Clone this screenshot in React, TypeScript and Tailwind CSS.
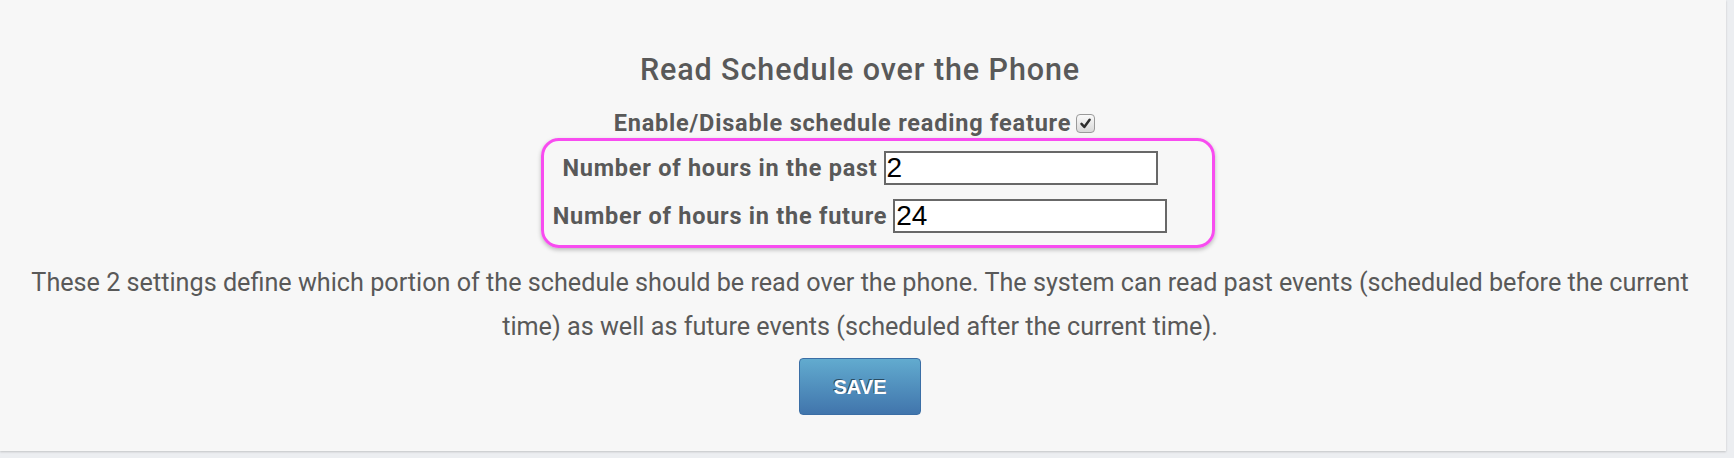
import { useState } from "react";

// Settings card: read schedule over the phone
export default function App() {
  const [past, setPast] = useState("2");
  const [future, setFuture] = useState("24");

  return (
    <div className="h-[458px] w-[1734px] overflow-hidden bg-[#eceef1] font-['Roboto',sans-serif] text-[#595959]">
      <div className="flex h-[451px] w-[1726px] flex-col items-center bg-[#f7f7f7] pr-[6px] shadow-[0_1px_2px_rgba(0,0,0,0.18)]">
        <h1 className="mt-[52px] text-[30.5px] font-medium leading-[36px] tracking-[0.9px]">
          Read Schedule over the Phone
        </h1>

        <label className="mt-[21px] flex items-center gap-[5px] pr-[11px] text-[23.5px] font-bold leading-[28px] tracking-[0.8px]">
          Enable/Disable schedule reading feature
          <span className="flex h-[19px] w-[19px] items-center justify-center rounded-[4px] border border-[#9a9a9a] bg-gradient-to-b from-[#fafafa] to-[#d9d9d9]">
            <svg viewBox="0 0 12 12" className="h-[13px] w-[13px]">
              <path d="M2.3 6.4 L4.9 9.2 L9.8 2.6" fill="none" stroke="#2e2e2e" strokeWidth="2.3" strokeLinecap="round" strokeLinejoin="round" />
            </svg>
          </span>
        </label>

        <div className="relative mt-[14px] flex flex-col items-center gap-[14px]">
          <div className="flex items-center gap-[6px]">
            <span className="text-[23.5px] font-bold leading-[28px] tracking-[0.75px]">Number of hours in the past</span>
            <input
              value={past}
              onChange={(e) => setPast(e.target.value)}
              className="h-[34px] w-[274px] border-2 border-[#686868] bg-white px-[1px] font-['Liberation_Sans',Arial,sans-serif] text-[28px] leading-none text-black outline-none"
            />
          </div>
          <div className="flex items-center gap-[6px]">
            <span className="text-[23.5px] font-bold leading-[28px] tracking-[0.75px]">Number of hours in the future</span>
            <input
              value={future}
              onChange={(e) => setFuture(e.target.value)}
              className="h-[34px] w-[274px] border-2 border-[#686868] bg-white px-[1px] font-['Liberation_Sans',Arial,sans-serif] text-[28px] leading-none text-black outline-none"
            />
          </div>
          {/* pink highlight annotation */}
          <div className="pointer-events-none absolute -top-[13px] -bottom-[15px] -left-[12px] -right-[48px] rounded-[18px] border-[3px] border-[#f84cf0] shadow-[0_2px_4px_rgba(0,0,0,0.25)]" />
        </div>

        <p className="mt-[28px] w-[1690px] text-center text-[25.2px] leading-[44px]">
          These 2 settings define which portion of the schedule should be read over the phone. The system can read past events (scheduled before the current time) as well as future events (scheduled after the current time).
        </p>

        <button className="mt-[9px] h-[57px] w-[122px] rounded-[4px] border border-[#3b6ea5] bg-gradient-to-b from-[#62abcf] to-[#4175ac] font-['Liberation_Sans',Arial,sans-serif] text-[20px] font-bold text-white [text-shadow:-1px_-1px_0_rgba(0,0,0,0.5)]">
          SAVE
        </button>
      </div>
    </div>
  );
}
